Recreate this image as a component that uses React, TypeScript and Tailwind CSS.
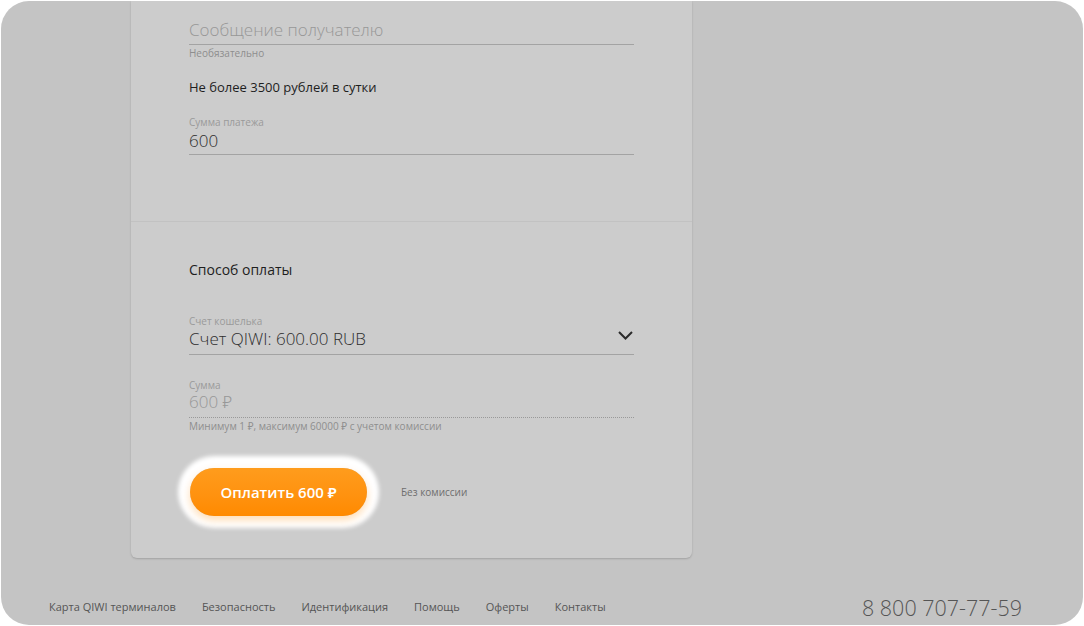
import React from 'react';

const FOOTER_LINKS = ['Карта QIWI терминалов', 'Безопасность', 'Идентификация', 'Помощь', 'Оферты', 'Контакты'];

const Field: React.FC<{
  label?: string;
  value: string;
  muted?: boolean;
  dotted?: boolean;
  select?: boolean;
  className?: string;
}> = ({ label, value, muted, dotted, select, className = 'pb-[3px]' }) => (
  <div>
    {label && <div className="text-[10px] leading-[12px] text-[#9a9a9a]">{label}</div>}
    <div
      className={`flex items-center justify-between border-b ${className} ${
        dotted ? 'border-dotted border-[#999]' : 'border-[#a3a3a3]'
      }`}
    >
      <span className={`text-[17px] leading-[22px] font-light ${muted ? 'text-[#979797]' : 'text-[#2e2e2e]'}`}>
        {value}
      </span>
      {select && (
        <svg width="15" height="9" viewBox="0 0 15 9" className="mr-px mb-[7px]">
          <path d="M1 1l6.5 6.5L14 1" fill="none" stroke="#2b2b2b" strokeWidth="2" />
        </svg>
      )}
    </div>
  </div>
);

export default function App() {
  return (
    <div className="w-[1084px] h-[626px] bg-white p-px" style={{ fontFamily: '"Open Sans", "Noto Sans", sans-serif' }}>
      <div className="h-full rounded-[28px] bg-[#c4c4c4] flex flex-col overflow-hidden">
        {/* Payment card */}
        <div className="ml-[130px] w-[561px] bg-[#cccccc] rounded-b-md shadow-[0_1px_2px_rgba(0,0,0,0.18)]">
          <div className="h-[221px] px-[58px] pt-[17px] border-b border-[#c2c2c2]">
            <div className="pb-[2px] border-b border-[#a3a3a3]">
              <span className="text-[17px] leading-[22px] font-light text-[#979797]">Сообщение получателю</span>
            </div>
            <div className="mt-[2px] text-[10px] leading-[12px] text-[#8e8e8e]">Необязательно</div>
            <div className="mt-[19px] text-[13px] leading-[18px] font-medium text-[#1e1e1e]">
              Не более 3500 рублей в сутки
            </div>
            <div className="mt-[20px]">
              <Field label="Сумма платежа" value="600" className="pt-[2px] pb-[2px]" />
            </div>
          </div>

          <div className="px-[58px] pt-[38px] pb-[42px]">
            <div className="text-[14px] leading-[20px] font-medium text-[#1e1e1e]">Способ оплаты</div>
            <div className="mt-[35px]">
              <Field label="Счет кошелька" value="Счет QIWI: 600.00 RUB" select className="pt-px pb-[4px]" />
            </div>
            <div className="mt-[24px]">
              <Field label="Сумма" value="600 ₽" muted dotted className="pb-[4px]" />
            </div>
            <div className="mt-[2px] text-[10px] leading-[12px] text-[#8e8e8e]">
              Минимум 1 ₽, максимум 60000 ₽ с учетом комиссии
            </div>
            <div className="mt-[36px] flex items-center gap-[34px]">
              <button className="ml-px w-[177px] h-[48px] rounded-full bg-gradient-to-b from-[#ff9c1c] to-[#ff8a00] text-white text-[15px] font-semibold shadow-[0_4px_8px_rgba(255,140,0,0.3),0_0_4px_12px_#ffffff]">
                Оплатить 600 ₽
              </button>
              <span className="text-[10px] text-[#6e6e6e]">Без комиссии</span>
            </div>
          </div>
        </div>

        {/* Footer */}
        <div className="mt-[37px] h-[26px] flex items-center justify-between pl-[48px] pr-[61px]">
          <div className="flex gap-[26px] mb-[2px]">
            {FOOTER_LINKS.map((link) => (
              <span key={link} className="text-[11px] text-[#555]">
                {link}
              </span>
            ))}
          </div>
          <span className="text-[21.5px] leading-[26px] font-light text-[#555]">8 800 707-77-59</span>
        </div>
      </div>
    </div>
  );
}
